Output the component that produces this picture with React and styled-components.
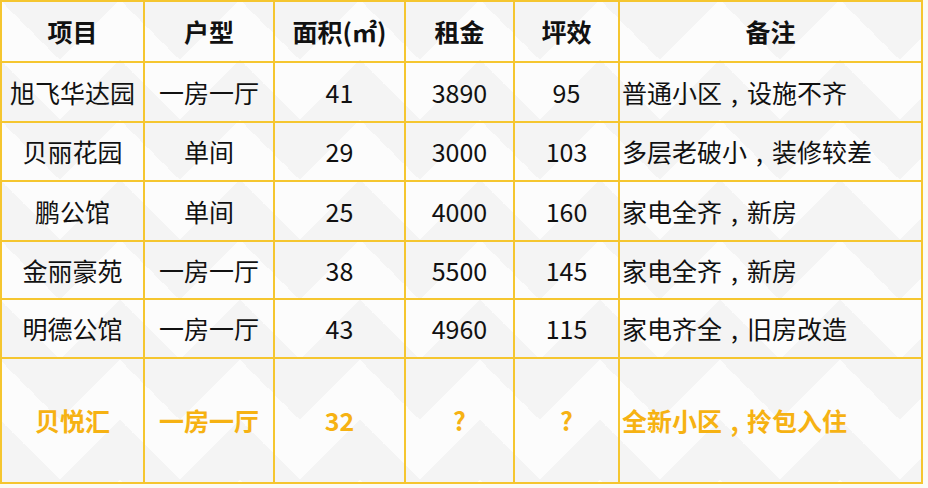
import React from "react";
import styled, { createGlobalStyle } from "styled-components";

const Global = createGlobalStyle`
  html, body { margin: 0; padding: 0; background: #fbfbf6; }
  body { font-family: "Noto Sans CJK SC", "Noto Sans", sans-serif; }
`;

const Table = styled.div`
  display: grid;
  width: 919px;
  grid-template-columns: 141px 128px 129px 107px 103px 301px;
  grid-template-rows: 59px 58px 57px 58px 56px 57px 123px;
  gap: 2px;
  padding: 2px;
  background: #f5c630;
`;

const Cell = styled.div`
  display: flex;
  align-items: center;
  justify-content: ${(p) => (p.$left ? "flex-start" : "center")};
  padding-left: ${(p) => (p.$left ? "2px" : "0")};
  font-size: 25px;
  line-height: 1;
  white-space: nowrap;
  color: ${(p) => (p.$hl ? "#f6b213" : "#111")};
  font-weight: ${(p) => (p.$bold ? 700 : 400)};
  background-color: #fcfcfc;
  background-image:
    linear-gradient(135deg, #f4f4f4 25%, transparent 25%),
    linear-gradient(225deg, #f4f4f4 25%, transparent 25%),
    linear-gradient(315deg, #f4f4f4 25%, transparent 25%),
    linear-gradient(45deg, #f4f4f4 25%, transparent 25%);
  background-position: -60px 0, -60px 0, 0 0, 0 0;
  background-size: 120px 120px;
  background-attachment: fixed;
`;

const Comma = styled.span`
  display: inline-block;
  width: 1em;
  text-align: center;
`;

const header = ["项目", "户型", "面积(㎡)", "租金", "坪效", "备注"];
const rows = [
  ["旭飞华达园", "一房一厅", "41", "3890", "95", "普通小区，设施不齐"],
  ["贝丽花园", "单间", "29", "3000", "103", "多层老破小，装修较差"],
  ["鹏公馆", "单间", "25", "4000", "160", "家电全齐，新房"],
  ["金丽豪苑", "一房一厅", "38", "5500", "145", "家电全齐，新房"],
  ["明德公馆", "一房一厅", "43", "4960", "115", "家电齐全，旧房改造"],
];
const last = ["贝悦汇", "一房一厅", "32", "?", "?", "全新小区，拎包入住"];

function Note({ text }) {
  const [a, b] = text.split("，");
  return (
    <>
      {a}
      <Comma>,</Comma>
      {b}
    </>
  );
}

export default function App() {
  return (
    <>
      <Global />
      <Table>
        {header.map((h) => (
          <Cell key={h} $bold>
            {h}
          </Cell>
        ))}
        {rows.map((r, i) =>
          r.map((c, j) => (
            <Cell key={i + "-" + j} $left={j === 5}>
              {j === 5 ? <Note text={c} /> : c}
            </Cell>
          ))
        )}
        {last.map((c, j) => (
          <Cell key={"l" + j} $left={j === 5} $bold $hl>
            {j === 5 ? <Note text={c} /> : c}
          </Cell>
        ))}
      </Table>
    </>
  );
}
